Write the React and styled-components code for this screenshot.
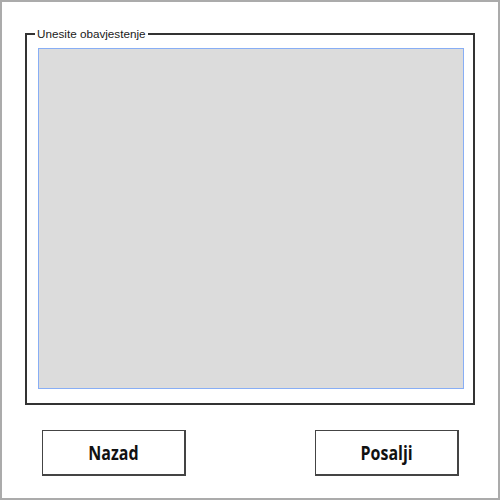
import React from "react";
import styled, { createGlobalStyle } from "styled-components";

const GlobalStyle = createGlobalStyle`
  html, body {
    margin: 0;
    padding: 0;
    background: #ffffff;
  }
`;

const App = () => {
  return (
    <>
      <GlobalStyle />
      <Frame>
        <Group>
          <Caption>Unesite obavjestenje</Caption>
          <MessageArea />
        </Group>
        <ButtonRow>
          <SketchButton>
            <Label>Nazad</Label>
          </SketchButton>
          <SketchButton>
            <Label>Posalji</Label>
          </SketchButton>
        </ButtonRow>
      </Frame>
    </>
  );
};

export default App;

const Frame = styled.div`
  width: 500px;
  height: 500px;
  box-sizing: border-box;
  border: 2px solid #ababab;
  padding: 25px 23px 0 23px;
  display: flex;
  flex-direction: column;
  background: #fff;
`;

const Group = styled.fieldset`
  margin: 0;
  width: 450px;
  height: 378px;
  box-sizing: border-box;
  border: 2px solid #333333;
  padding: 8px 9px 14px 11px;
`;

const Caption = styled.legend`
  font-family: "Liberation Sans", Arial, sans-serif;
  font-size: 11.7px;
  line-height: 13px;
  color: #1a1a1a;
  padding: 0 2px;
  margin-left: -3px;
`;

const MessageArea = styled.div`
  height: 341px;
  box-sizing: border-box;
  background: #dcdcdc;
  border: 1px solid #88aef5;
`;

const ButtonRow = styled.div`
  display: flex;
  justify-content: space-between;
  padding: 25px 16px 0 17px;
`;

const SketchButton = styled.button`
  width: 144px;
  height: 46px;
  box-sizing: border-box;
  background: #fff;
  border: 1px solid #444;
  border-right-width: 2px;
  border-bottom-width: 2px;
  padding: 0;
  display: flex;
  align-items: center;
  justify-content: center;
  cursor: pointer;
`;

const Label = styled.span`
  display: inline-block;
  font-family: "Open Sans", "DejaVu Sans", sans-serif;
  font-weight: bold;
  font-size: 20px;
  color: #111;
  transform: scaleX(0.8);
`;
